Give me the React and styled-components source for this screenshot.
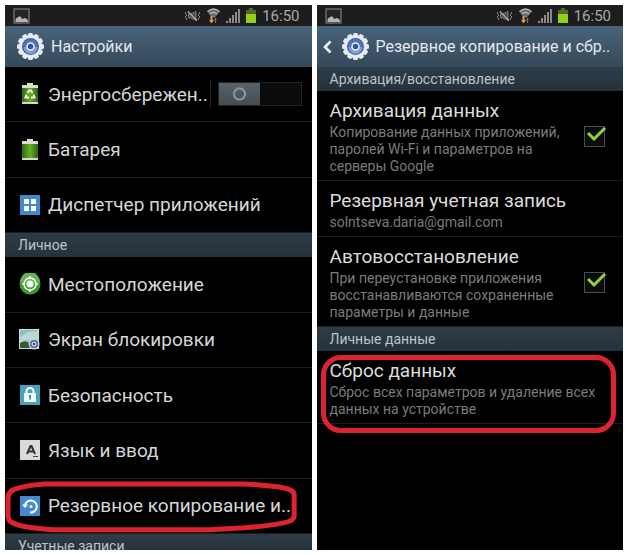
import React, { useState } from "react";
import styled, { createGlobalStyle, ThemeProvider } from "styled-components";

const theme = {
  text: "#d6d6d6",
  muted: "#7b7b7b",
  line: "#1c1d1e",
  mark: "#dc2430",
};

const GlobalStyle = createGlobalStyle`
  * {
    box-sizing: border-box;
  }
  body {
    margin: 0;
    background: #fff;
    font-family: Roboto, "Noto Sans", sans-serif;
  }
  h1, h2, p {
    margin: 0;
    font-weight: 400;
  }
  svg {
    flex-shrink: 0;
  }
`;

const PictureIcon = () => (
  <svg width="17" height="16" viewBox="0 0 17 16">
    <rect x="1" y="1" width="15" height="14" fill="#242424" stroke="#8c8c8c" />
    <path d="M2.500 14v-3q1-2 2.500-1.500 2-2.500 3.500.5 1 1.500 2 .5 2-1 3 .5 1.500 0 1.500 3z" fill="#b5b5b5" />
  </svg>
);

const MuteIcon = () => (
  <svg width="17" height="14" viewBox="0 0 17 14" fill="none" stroke="#7d7d7d">
    <path d="M4.500 5h2.500l5-2.500v9L7 9H4.500z" fill="#4c4c4c" />
    <path d="M4 2.500l9 9" stroke="#a5a5a5" strokeWidth="1.500" />
    <path d="M1.500 3v2M2.500 5v2M1.500 7v2M2.500 9v2M15.500 3v2M14.500 5v2M15.500 7v2M14.500 9v2" />
  </svg>
);

const WifiIcon = () => (
  <svg width="13" height="17" viewBox="0 0 13 17">
    <path d="M0 4.500Q6.500-1.500 13 4.500L8 10.500H5z" fill="#6d6d6d" />
    <g fill="none" stroke="#b0b0b0" strokeWidth="1.500">
      <path d="M.5 4.500q6-5 12 0" />
      <path d="M3 7q3.500-3 7 0" />
    </g>
    <path d="M3.500 9h2v4H7l-2.500 3.500L2 13h1.500z" fill="#e69a35" />
    <path d="M8 16v-3H7l1.500-2.500L10 13H9v3z" fill="#777" />
  </svg>
);

const SignalIcon = () => (
  <svg width="14" height="14" viewBox="0 0 14 14" fill="#8a8a8a">
    <path d="M0 12h2v2H0zM3 9h2v5H3zM6 6h2v8H6zM9 3h2v11H9zM12 0h2v14h-2z" />
  </svg>
);

const StatusBatteryIcon = () => (
  <svg width="10" height="15" viewBox="0 0 10 15">
    <path d="M3 0h4v2h3v4H0V2h3z" fill="#4d6a2c" />
    <path d="M0 6h10v9H0z" fill="#8fd117" />
  </svg>
);

const teeth = [0, 30, 60, 90, 120, 150, 180, 210, 240, 270, 300, 330];

const GearIcon = () => (
  <svg width="27" height="27" viewBox="0 0 27 27">
    <g fill="#e6ebf3">
      {teeth.map((angle) => (
        <rect
          key={angle}
          x="11"
          y="0"
          width="5"
          height="6"
          rx="1.500"
          transform={`rotate(${angle} 13.500 13.500)`}
        />
      ))}
      <circle cx="13.500" cy="13.500" r="11.500" />
    </g>
    <circle cx="13.500" cy="13.500" r="8.500" fill="#3d5c9f" />
    <path d="M6 13.500a7.500 7.500 0 0 1 15 0z" fill="#5673b3" />
    <path d="M6.500 14a7 7 0 0 0 14 0z" fill="#7f9fd4" />
    <circle cx="13.500" cy="13.500" r="3.500" fill="#34549a" stroke="#e9eef8" strokeWidth="1.500" />
  </svg>
);

const BatteryIcon = ({ eco }) => (
  <svg width="20" height="22" viewBox="0 0 20 22">
    <defs>
      <linearGradient id="cell" x1="0" x2="1">
        <stop offset="0" stopColor="#2c6b10" />
        <stop offset="0.5" stopColor="#68ae24" />
        <stop offset="1" stopColor="#2b650f" />
      </linearGradient>
    </defs>
    <path d="M7 0h6v2h5v3H2V2h5z" fill="#dcdccf" />
    <path d="M2 5h16v14H2z" fill="url(#cell)" />
    <path d="M2 19h16v2H2z" fill="#d4d8cc" />
    {eco && (
      <g fill="none" stroke="#f1f8e8" strokeWidth="2">
        <path d="M7.500 10L9 7.500h2l1.500 2.500" />
        <path d="M13.500 11.500l1 3h-3.500" />
        <path d="M9 14.500H5.500l1-3" />
      </g>
    )}
  </svg>
);

const AppsIcon = () => (
  <svg width="20" height="20" viewBox="0 0 20 20">
    <rect width="20" height="20" fill="#4189cf" />
    <path d="M4 4h5v5H4zM11 4h5v5h-5zM4 11h5v5H4zM11 11h5v5h-5z" fill="#fff" />
  </svg>
);

const LocationIcon = () => (
  <svg width="22" height="22" viewBox="0 0 22 22">
    <circle cx="11" cy="11" r="10.500" fill="#3c9a35" />
    <path d="M1 9a10 10 0 0 1 20 0q-10 5-20 0z" fill="#65b653" />
    <circle cx="11" cy="11" r="6" fill="none" stroke="#fff" strokeWidth="1.500" />
    <circle cx="11" cy="11" r="3.500" fill="#f2f8f0" />
    <path d="M11 3v3M11 16v3M3 11h3M16 11h3" stroke="#fff" strokeWidth="1.500" />
  </svg>
);

const LockScreenIcon = () => (
  <svg width="21" height="21" viewBox="0 0 21 21">
    <rect width="20" height="20" fill="#c9dcd9" />
    <path d="M1 1h18v11H1z" fill="#8fc0c4" />
    <path d="M1 8l8-5 10-1v8L1 12z" fill="#b9d9d8" />
    <path d="M1 14q4-3 8-1l4 2v4H1z" fill="#315c2b" />
    <circle cx="15" cy="15" r="5.500" fill="#c3d0dd" />
    <circle cx="15" cy="15" r="4" fill="#4a6d92" />
    <circle cx="15" cy="15" r="2" fill="#35557b" stroke="#fff" />
  </svg>
);

const LockIcon = () => (
  <svg width="20" height="20" viewBox="0 0 20 20">
    <rect width="20" height="20" fill="#44a5bd" />
    <path d="M6.500 9V6.500a3.500 3.500 0 0 1 7 0V9" fill="none" stroke="#fff" strokeWidth="2" />
    <rect x="4" y="8" width="12" height="9" fill="#f4fafb" />
    <path d="M9 10h2v2l-.5 3h-1L9 12z" fill="#3e8da2" />
  </svg>
);

const LanguageIcon = () => (
  <svg width="20" height="20" viewBox="0 0 20 20">
    <rect width="20" height="20" fill="#dadada" />
    <path d="M7 14l3.500-8h1l3.500 8M8.500 11.500h5" fill="none" stroke="#333" strokeWidth="2" />
    <path d="M13 16.500h5" stroke="#444" />
  </svg>
);

const BackupIcon = () => (
  <svg width="20" height="20" viewBox="0 0 20 20">
    <rect width="20" height="20" fill="#4389cf" />
    <path d="M5 9a6 6 0 1 1 5 7.500" fill="none" stroke="#fff" strokeWidth="2" />
    <path d="M2 8.500h6L5 12z" fill="#fff" />
    <circle cx="11" cy="10.500" r="1.500" fill="#fff" />
  </svg>
);

const BackIcon = () => (
  <svg width="9" height="14" viewBox="0 0 9 14">
    <path d="M7.500 1.500L2 7l5.500 5.500" fill="none" stroke="#fff" strokeWidth="2.500" />
  </svg>
);

const StatusBar = () => (
  <Status>
    <PictureIcon />
    <StatusIcons>
      <MuteIcon />
      <WifiIcon />
      <SignalIcon />
      <StatusBatteryIcon />
      <time>16:50</time>
    </StatusIcons>
  </Status>
);

const LinkRow = ({ icon, label, circled }) => (
  <Row>
    <RowLink href="#">
      <IconBox>{icon}</IconBox>
      {label}
    </RowLink>
    {circled && (
      <Loop viewBox="0 0 292 54">
        <path d="M3 25V19Q3 11 14 9Q24 6 40 5H238Q262 6 280 9Q290 11 290 16V37Q290 42 279 44Q264 47 240 49L205 51H50Q15 49 6 43Q3 41 3 36Z" />
      </Loop>
    )}
  </Row>
);

const Option = ({ id, title, text, checked }) => {
  const [on, setOn] = useState(checked);
  return (
    <OptionRow>
      <OptionText htmlFor={id}>
        <OptionTitle>{title}</OptionTitle>
        <OptionNote>{text}</OptionNote>
      </OptionText>
      <CheckBox>
        <input id={id} type="checkbox" checked={on} onChange={() => setOn(!on)} />
        {on && (
          <svg width="24" height="22" viewBox="0 0 24 22">
            <path d="M4 7l6 6L21 2" fill="none" stroke="#93d33a" strokeWidth="3" />
          </svg>
        )}
      </CheckBox>
    </OptionRow>
  );
};

const App = () => {
  const [saving, setSaving] = useState(false);
  return (
    <ThemeProvider theme={theme}>
      <GlobalStyle />
      <Page>
        <Screen>
          <StatusBar />
          <Header>
            <GearIcon />
            <h1>Настройки</h1>
          </Header>
          <Row>
            <RowLabel htmlFor="saving">
              <IconBox>
                <BatteryIcon eco />
              </IconBox>
              Энергосбережен..
            </RowLabel>
            <SwitchBox>
              <Switch
                id="saving"
                type="checkbox"
                role="switch"
                checked={saving}
                onChange={() => setSaving(!saving)}
              />
            </SwitchBox>
          </Row>
          <LinkRow icon={<BatteryIcon />} label="Батарея" />
          <LinkRow icon={<AppsIcon />} label="Диспетчер приложений" />
          <Section>Личное</Section>
          <LinkRow icon={<LocationIcon />} label="Местоположение" />
          <LinkRow icon={<LockScreenIcon />} label="Экран блокировки" />
          <LinkRow icon={<LockIcon />} label="Безопасность" />
          <LinkRow icon={<LanguageIcon />} label="Язык и ввод" />
          <LinkRow icon={<BackupIcon />} label="Резервное копирование и.." circled />
          <Section $cut>Учетные записи</Section>
        </Screen>
        <Screen>
          <StatusBar />
          <Header $back>
            <BackLink href="#" aria-label="Назад">
              <BackIcon />
            </BackLink>
            <GearIcon />
            <h1>Резервное копирование и сбр..</h1>
          </Header>
          <Section>Архивация/восстановление</Section>
          <Option
            id="backup"
            title="Архивация данных"
            text="Копирование данных приложений, паролей Wi-Fi и параметров на серверы Google"
            checked
          />
          <OptionLink href="#">
            <OptionTitle>Резервная учетная запись</OptionTitle>
            <OptionNote>solntseva.daria@gmail.com</OptionNote>
          </OptionLink>
          <Option
            id="restore"
            title="Автовосстановление"
            text="При переустановке приложения восстанавливаются сохраненные параметры и данные"
            checked
          />
          <Section>Личные данные</Section>
          <OptionLink href="#">
            <OptionTitle>Сброс данных</OptionTitle>
            <OptionNote>Сброс всех параметров и удаление всех данных на устройстве</OptionNote>
            <Frame />
          </OptionLink>
        </Screen>
      </Page>
    </ThemeProvider>
  );
};

const Page = styled.main`
  min-height: 100vh;
  padding: 5px;
  display: grid;
  grid-template-columns: 1fr 1fr;
  gap: 5px;
`;
const Screen = styled.section`
  min-width: 0;
  display: flex;
  flex-flow: column;
  background: #000;
  color: ${({ theme }) => theme.text};
`;
const Status = styled.div`
  height: 21px;
  padding: 0 12px 0 8px;
  display: flex;
  align-items: center;
  justify-content: space-between;
  background: #1d1d1d;
`;
const StatusIcons = styled.div`
  display: flex;
  align-items: center;
  gap: 6px;
  time {
    font-size: 15px;
    line-height: 20px;
    color: #a9a9a9;
  }
`;
const Header = styled.header`
  height: 41px;
  padding-left: ${({ $back }) => ($back ? "6px" : "12px")};
  display: flex;
  align-items: center;
  gap: 7px;
  background: linear-gradient(#496379, #34495a);
  h1 {
    font-size: 16px;
    white-space: nowrap;
    color: #e6e9ec;
  }
`;
const BackLink = styled.a`
  display: flex;
  padding-right: 3px;
`;
const Section = styled.h2`
  height: ${({ $cut }) => ($cut ? "16px" : "24px")};
  padding-left: 13px;
  overflow: hidden;
  font-size: 14px;
  line-height: 24px;
  color: #bdc3c7;
  background: linear-gradient(#2d3c47, #25323b);
`;
const Row = styled.div`
  position: relative;
  min-height: 55px;
  flex: 1;
  display: flex;
  border-bottom: 1px solid ${({ theme }) => theme.line};
`;
const RowLink = styled.a`
  flex: 1;
  min-width: 0;
  padding-left: 14px;
  display: flex;
  align-items: center;
  gap: 8px;
  font-size: 19px;
  white-space: nowrap;
  color: inherit;
  text-decoration: none;
`;
const RowLabel = styled(RowLink).attrs({ as: "label" })``;
const IconBox = styled.span`
  width: 21px;
  display: flex;
  justify-content: center;
`;
const SwitchBox = styled.div`
  margin: 14px 10px 14px 0;
  padding-left: 7px;
  display: flex;
  align-items: center;
  border-left: 1px solid #252525;
`;
const Switch = styled.input`
  appearance: none;
  width: 84px;
  height: 24px;
  margin: 0;
  display: flex;
  justify-content: ${({ checked }) => (checked ? "flex-end" : "flex-start")};
  align-items: center;
  background: #0b0b0b;
  border: 1px solid #222;
  &:before {
    content: "";
    width: 41px;
    height: 22px;
    background: radial-gradient(
        circle,
        transparent 4px,
        #8d969b 5px,
        #8d969b 6px,
        transparent 7px
      ),
      linear-gradient(#56636b, #434d54);
  }
`;
const Loop = styled.svg`
  position: absolute;
  left: 0;
  top: 0;
  width: 95%;
  pointer-events: none;
  overflow: visible;
  fill: none;
  stroke: ${({ theme }) => theme.mark};
  stroke-width: 5px;
`;
const OptionRow = styled.div`
  padding: 7px 18px 5px 13px;
  display: flex;
  align-items: center;
  justify-content: space-between;
  border-bottom: 1px solid ${({ theme }) => theme.line};
`;
const OptionText = styled.label`
  flex: 1;
  min-width: 0;
  padding-right: 16px;
`;
const OptionTitle = styled.span`
  display: block;
  font-size: 19px;
  line-height: 26px;
  color: #dcdcdc;
`;
const OptionNote = styled.span`
  display: block;
  font-size: 14px;
  line-height: 17px;
  color: ${({ theme }) => theme.muted};
`;
const OptionLink = styled.a`
  position: relative;
  padding: 7px 13px 5px;
  display: block;
  text-decoration: none;
  border-bottom: 1px solid ${({ theme }) => theme.line};
`;
const CheckBox = styled.span`
  position: relative;
  display: flex;
  input {
    appearance: none;
    width: 21px;
    height: 21px;
    margin: 0;
    background: #0a0b0c;
    border: 1px solid #4b4d52;
  }
  svg {
    position: absolute;
    left: 0;
    top: 0;
    pointer-events: none;
  }
`;
const Frame = styled.span`
  position: absolute;
  inset: 4px 7px -10px 4px;
  border: 5px solid ${({ theme }) => theme.mark};
  border-radius: 20px;
`;

export default App;
